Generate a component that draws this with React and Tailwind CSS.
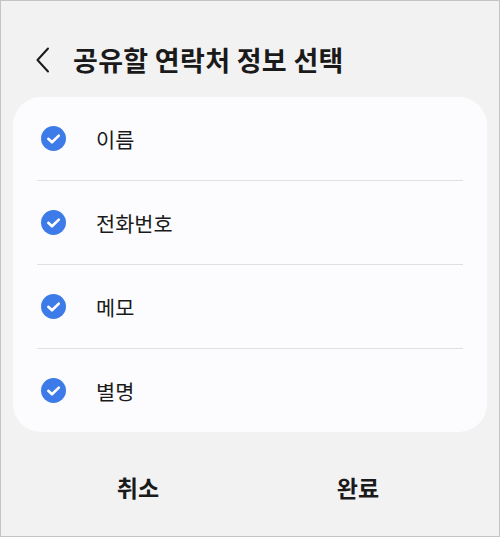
import React from "react";

const items = ["이름", "전화번호", "메모", "별명"];

function Check() {
  return (
    <svg width="25" height="25" viewBox="0 0 25 25">
      <circle cx="12.5" cy="12.5" r="12.5" fill="#3d7be8" />
      <path d="M7.3 12.8 L11 16.3 L17.8 9.6" fill="none" stroke="#fff" strokeWidth="2.6" strokeLinecap="round" strokeLinejoin="round" />
    </svg>
  );
}

export default function App() {
  return (
    <div
      className="w-[500px] h-[537px] bg-[#f2f2f3] border border-[#c4c4c4] flex flex-col text-[#1a1a1a]"
      style={{ fontFamily: '"Noto Sans CJK KR", "Noto Sans", sans-serif' }}
    >
      <div className="h-[96px] flex items-start pt-[41px] pl-[35px]">
        <svg width="14" height="26" viewBox="0 0 14 26" className="mt-[5px]">
          <path d="M12 1.5 L1.5 13 L12 24.5" fill="none" stroke="#1a1a1a" strokeWidth="2" strokeLinecap="round" strokeLinejoin="round" />
        </svg>
        <div className="ml-[23px] text-[27px] font-bold leading-[36px] tracking-[0.3px]">공유할 연락처 정보 선택</div>
      </div>
      <div className="mx-[12px] bg-[#fcfcfe] rounded-[28px] flex flex-col">
        {items.map((t, i) => (
          <React.Fragment key={t}>
            {i > 0 && <div className="mx-[24px] h-px bg-[#dfdfe1]" />}
            <div className="h-[83px] flex items-center pl-[28px]">
              <Check />
              <span className="ml-[30px] text-[20.8px] leading-[28px]">{t}</span>
            </div>
          </React.Fragment>
        ))}
      </div>
      <div className="flex-1 flex items-center pl-[27px] pr-[31px] pt-[6px]">
        <div className="flex-1 text-center text-[23px] font-bold">취소</div>
        <div className="flex-1 text-center text-[23px] font-bold">완료</div>
      </div>
    </div>
  );
}
